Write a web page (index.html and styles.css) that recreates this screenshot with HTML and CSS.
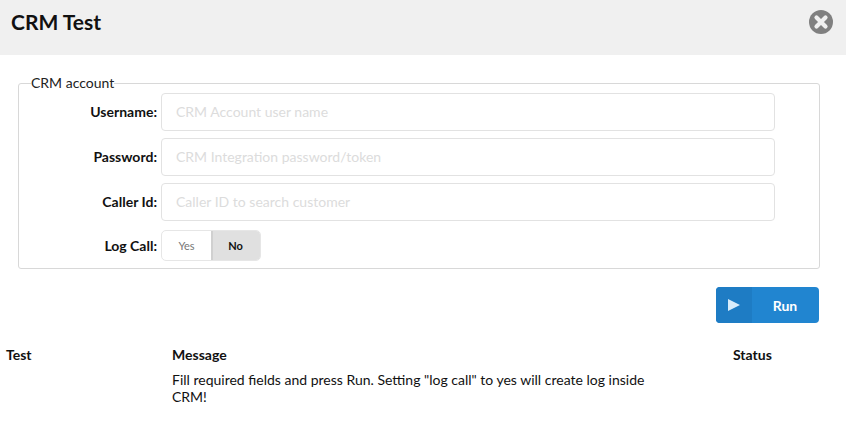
FILE: index.html
```
<!DOCTYPE html>
<html lang="en">
<head>
<meta charset="utf-8">
<title>CRM Test</title>
<link rel="stylesheet" href="styles.css">
</head>
<body>
<header class="header">
  <h1 class="title">CRM Test</h1>
  <button class="close" type="button" aria-label="Close">
    <svg viewBox="0 0 24 24" width="24" height="24"><circle cx="12" cy="12" r="12" fill="#808080"/><path d="M7.5 7.5l9 9M16.5 7.5l-9 9" stroke="#f0f0f0" stroke-width="4.2" stroke-linecap="round" fill="none"/></svg>
  </button>
</header>
<main class="content">
  <fieldset class="account">
    <legend class="legend">CRM account</legend>
    <div class="row"><label class="label label-field">Username:</label><input class="input" placeholder="CRM Account user name"></div>
    <div class="row"><label class="label label-field">Password:</label><input class="input" placeholder="CRM Integration password/token"></div>
    <div class="row"><label class="label label-field">Caller Id:</label><input class="input" placeholder="Caller ID to search customer"></div>
    <div class="row row-toggle"><span class="label">Log Call:</span>
      <div class="toggle"><span class="opt">Yes</span><span class="opt opt-on">No</span></div>
    </div>
  </fieldset>
  <div class="actions">
    <button class="run" type="button">
      <span class="run-icon"><svg viewBox="0 0 12 12" width="12" height="12"><path d="M0 0L12 6L0 12Z" fill="#d8ecfb"/></svg></span>
      <span class="run-text">Run</span>
    </button>
  </div>
  <table class="results">
    <thead><tr><th class="c1">Test</th><th class="c2">Message</th><th class="c3">Status</th></tr></thead>
    <tbody><tr><td></td><td class="msg">Fill required fields and press Run. Setting "log call" to yes will create log inside CRM!</td><td></td></tr></tbody>
  </table>
</main>
</body>
</html>
```
FILE: styles.css
```
* { box-sizing: border-box; }
html, body { margin: 0; padding: 0; }
body { width: 846px; height: 423px; overflow: hidden; background: #fff; font-family: Lato, "Liberation Sans", sans-serif; font-size: 14px; color: #111; }
.header { height: 55px; background: #f0f0f0; display: flex; align-items: flex-start; justify-content: space-between; padding: 10px 13px 0 11px; }
.title { margin: -1px 0 0; font-size: 21px; line-height: 26px; font-weight: 700; color: #111; }
.close { border: 0; padding: 0; background: none; width: 24px; height: 24px; display: block; }
.close svg { display: block; }
.content { padding: 19px 27px 0 6px; }
.account { margin: 0 0 0 12px; width: 802px; height: 195px; padding: 0; border: 1px solid #d8d8d8; border-radius: 3px; }
.legend { margin-left: 12px; padding: 0 0 2px; font-size: 14px; line-height: 17px; color: #222; }
.row { display: flex; align-items: center; gap: 4px; height: 38px; margin-bottom: 7px; }
.label { width: 138px; text-align: right; font-weight: 700; font-size: 14px; color: #111; }
.label-field { padding-bottom: 2px; }
.input { width: 614px; height: 38px; border: 1px solid #e2e2e2; border-radius: 4px; padding: 0 14px 2px; font: 14px Lato, sans-serif; outline: none; }
.input::placeholder { color: #dcdcdc; opacity: 1; }
.row-toggle { height: 31px; margin: 9px 0 0; }
.toggle { width: 100px; height: 31px; display: flex; border: 1px solid #e6e6e6; border-radius: 5px; overflow: hidden; }
.opt { flex: 1; display: flex; align-items: center; justify-content: center; font-size: 11px; color: #777; }
.opt-on { background: #e0e0e0; color: #111; font-weight: 700; box-shadow: inset 2px 0 0 #d0d0d0; }
.actions { display: flex; justify-content: flex-end; margin-top: 18px; }
.run { width: 103px; height: 36px; border: 0; border-radius: 4px; padding: 0; background: #2185d0; color: #fff; display: flex; font: 700 14px Lato, sans-serif; overflow: hidden; }
.run-icon { width: 36px; height: 100%; background: #1e7cc4; display: flex; align-items: center; justify-content: center; }
.run-text { flex: 1; display: flex; align-items: center; justify-content: center; padding-right: 1px; }
.results { border-collapse: collapse; margin-top: 23px; table-layout: fixed; width: 814px; }
.results th { text-align: left; font-weight: 700; font-size: 14px; line-height: 17px; padding: 0 0 8px; }
.results td { padding: 0; vertical-align: top; font-size: 14px; line-height: 17px; }
.c1 { width: 166px; }
.c2 { width: 561px; }
.msg { padding-right: 80px !important; }
```
